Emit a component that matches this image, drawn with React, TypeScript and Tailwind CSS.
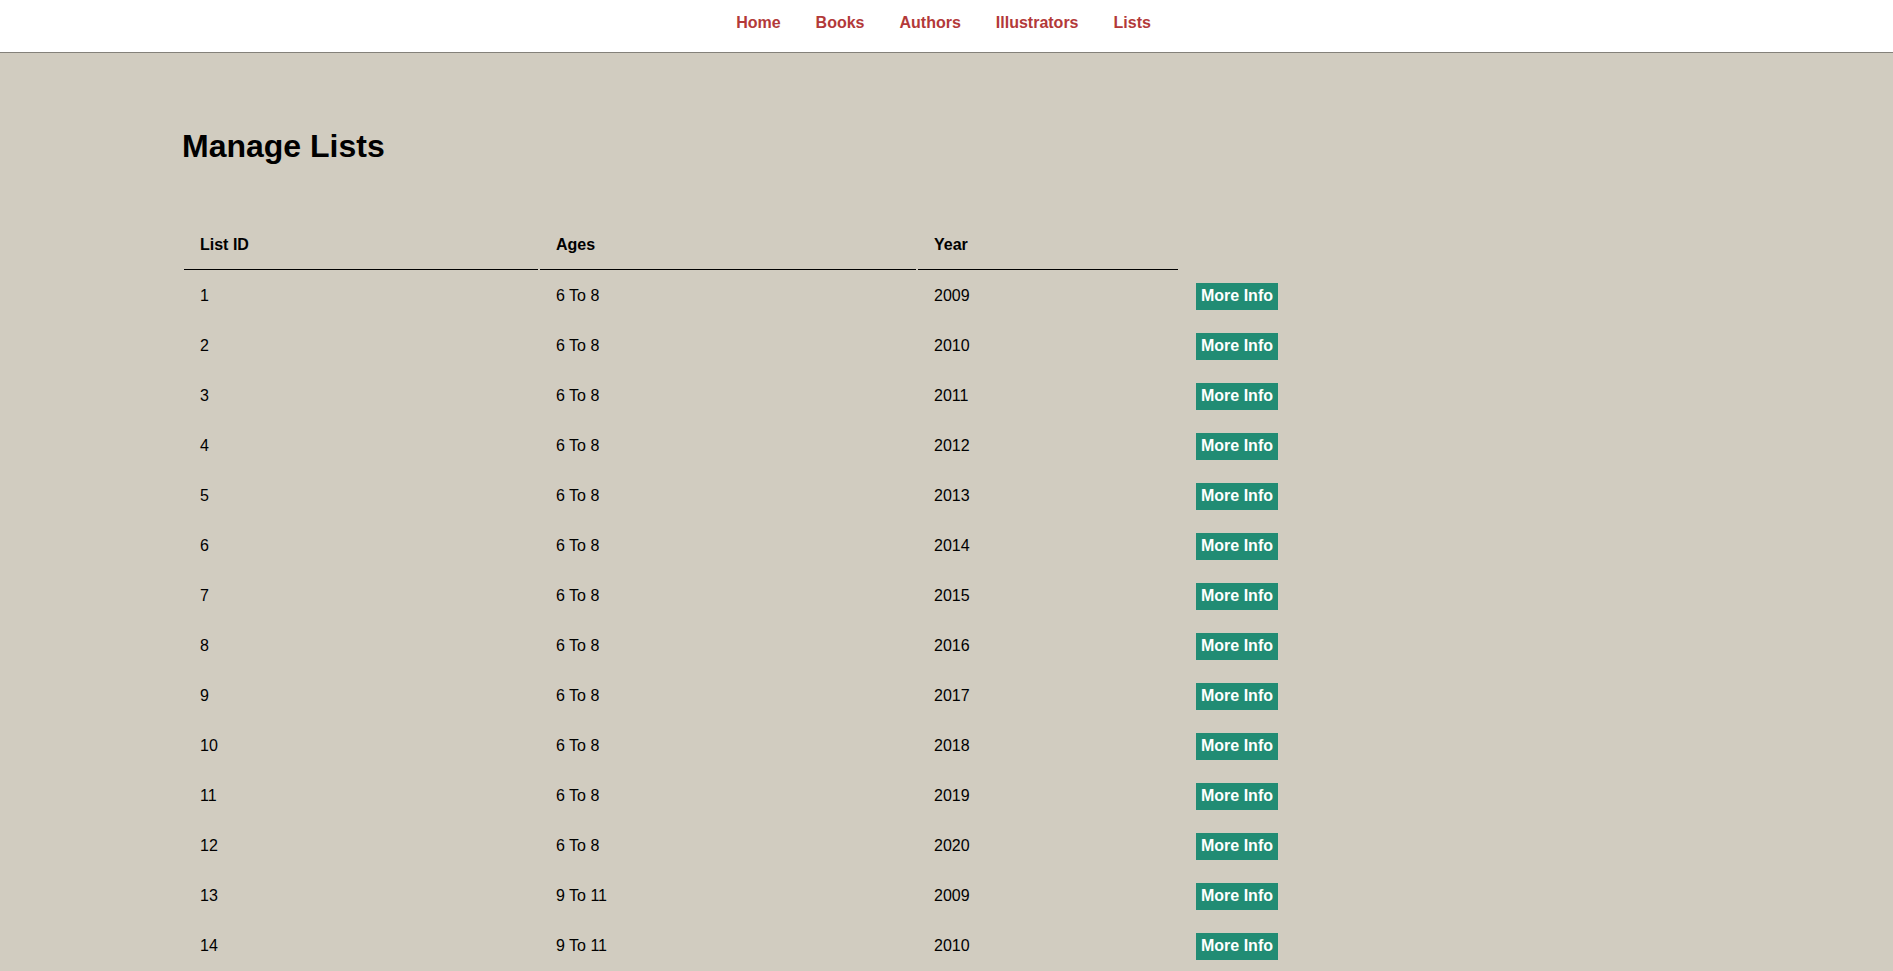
import React from 'react';

const navLinks = ['Home', 'Books', 'Authors', 'Illustrators', 'Lists'];

const lists = Array.from({ length: 24 }, (_, i) => ({
  id: i + 1,
  ages: i < 12 ? '6 To 8' : '9 To 11',
  year: 2009 + (i % 12),
}));

export default function App() {
  return (
    <div className="min-h-screen bg-[#d1ccc0] font-['Liberation_Sans',Arial,sans-serif] text-black">
      {/* Top nav */}
      <nav className="h-[53px] bg-white border-b border-[#84817a] flex justify-center gap-[35px] pt-[14px] pr-[6px]">
        {navLinks.map((l) => (
          <a key={l} href="#" className="text-[16px] leading-[18px] font-bold text-[#b33939]">
            {l}
          </a>
        ))}
      </nav>

      <main className="pl-[182px] pb-10">
        <h1 className="mt-[75px] text-[32px] leading-[37px] font-bold">Manage Lists</h1>

        <table className="mt-[54px] table-fixed border-separate border-spacing-[2px] text-[16px] leading-[18px]">
          <thead>
            <tr>
              <th className="w-[354px] h-[49px] pl-[16px] text-left font-bold border-b border-black">List ID</th>
              <th className="w-[376px] h-[49px] pl-[16px] text-left font-bold border-b border-black">Ages</th>
              <th className="w-[260px] h-[49px] pl-[16px] text-left font-bold border-b border-black">Year</th>
              <th className="w-[200px]"></th>
            </tr>
          </thead>
          <tbody>
            {lists.map((row) => (
              <tr key={row.id}>
                <td className="h-[48px] pl-[16px]">{row.id}</td>
                <td className="h-[48px] pl-[16px]">{row.ages}</td>
                <td className="h-[48px] pl-[16px]">{row.year}</td>
                <td className="h-[48px] pl-[16px]">
                  <button className="h-[27px] px-[5px] bg-[#218c74] text-white font-bold text-[16px] leading-[18px]">
                    More Info
                  </button>
                </td>
              </tr>
            ))}
          </tbody>
        </table>
      </main>
    </div>
  );
}
